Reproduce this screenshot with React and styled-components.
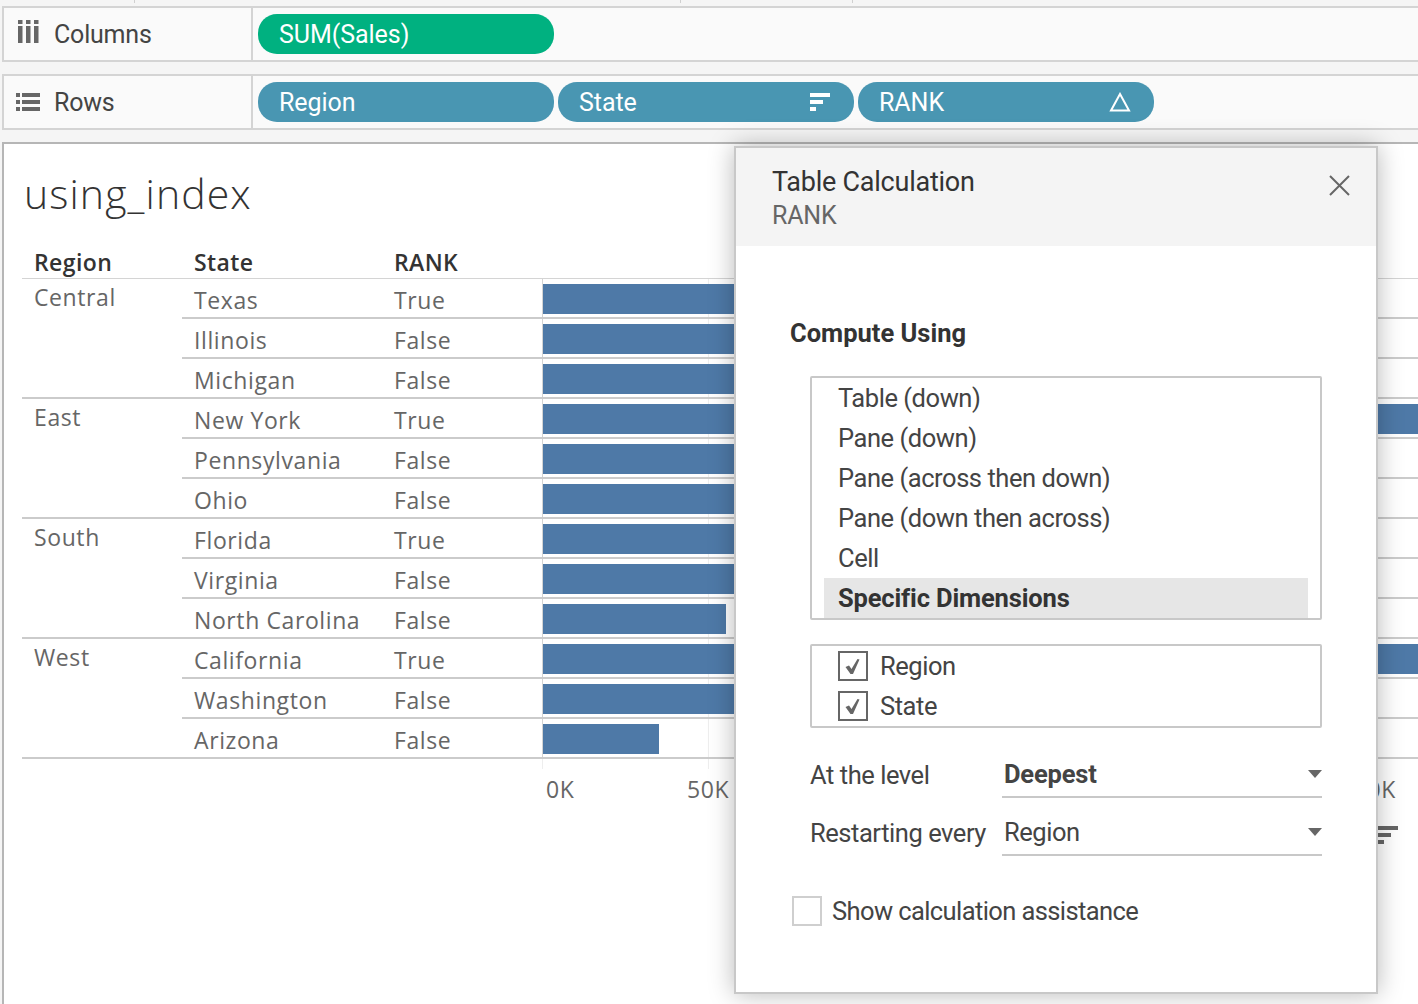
import React from 'react';
import styled, { createGlobalStyle } from 'styled-components';

const GlobalStyle = createGlobalStyle`
  html, body {
    margin: 0;
    padding: 0;
    background: #f5f5f5;
  }
  * {
    box-sizing: border-box;
  }
`;

const PX_PER_K = 3.3;

const regions = [
  { name: 'Central', rows: [['Texas', 'True', 170], ['Illinois', 'False', 80], ['Michigan', 'False', 76]] },
  { name: 'East', rows: [['New York', 'True', 310], ['Pennsylvania', 'False', 116], ['Ohio', 'False', 78]] },
  { name: 'South', rows: [['Florida', 'True', 89], ['Virginia', 'False', 71], ['North Carolina', 'False', 55.5]] },
  { name: 'West', rows: [['California', 'True', 457], ['Washington', 'False', 139], ['Arizona', 'False', 35]] },
];

const computeOptions = ['Table (down)', 'Pane (down)', 'Pane (across then down)', 'Pane (down then across)', 'Cell'];

const Page = styled.div`
  position: relative;
  width: 1418px;
  height: 1004px;
  overflow: hidden;
  display: flex;
  flex-direction: column;
  background: #f5f5f5;
  font-family: Roboto, "Liberation Sans", sans-serif;
  color: #333;
`;

const TopStrip = styled.div`
  height: 6px;
  display: flex;
  align-items: flex-start;
`;

const Tick = styled.span`
  width: 1px;
  height: 3px;
  background: #d0d0d0;
  margin-left: ${(p) => p.$gap}px;
`;

const Shelf = styled.div`
  height: 56px;
  margin: 0 0 12px 2px;
  display: flex;
  align-items: center;
  background: #fafafa;
  border: 2px solid #d4d4d4;
  border-right: none;
`;

const ShelfLabel = styled.div`
  width: 249px;
  height: 100%;
  padding-left: 12px;
  display: flex;
  align-items: center;
  gap: 14px;
  border-right: 2px solid #d4d4d4;
  font-size: 25px;
  letter-spacing: -0.2px;
  color: #444;
`;

const Pills = styled.div`
  display: flex;
  gap: 4px;
  padding-left: 5px;
`;

const Pill = styled.div`
  width: 296px;
  height: 40px;
  border-radius: 19px;
  padding: 0 23px 0 21px;
  display: flex;
  align-items: center;
  justify-content: space-between;
  background: ${(p) => (p.$measure ? '#00b180' : '#4996b2')};
  color: #fff;
  font-size: 25px;
  letter-spacing: -0.05px;
`;

const Viz = styled.div`
  flex: 1;
  margin-left: 2px;
  padding-left: 18px;
  background: #fff;
  border-top: 2px solid #b6b6b6;
  border-left: 2px solid #b6b6b6;
`;

const VizTitle = styled.div`
  height: 104px;
  padding: 24px 0 0 2px;
  font-family: "Open Sans", sans-serif;
  font-size: 41px;
  line-height: 50px;
  font-weight: 300;
  letter-spacing: 1.1px;
  color: #333;
`;

const Columns = styled.div`
  display: grid;
  grid-template-columns: 160px 200px 160px 1fr;
`;

const HeaderRow = styled(Columns)`
  height: 31px;
  border-bottom: 1px solid #d4d4d4;
`;

const HeaderCell = styled.div`
  padding-left: 12px;
  font-family: "Open Sans", sans-serif;
  font-size: 23px;
  line-height: 28px;
  font-weight: 600;
  letter-spacing: 0.4px;
  color: #333;
`;

const RegionGroup = styled.div`
  display: grid;
  grid-template-columns: 160px 1fr;
  border-bottom: 2px solid #cbcbcb;
`;

const RegionName = styled.div`
  padding: 2px 0 0 12px;
  font-family: "Open Sans", sans-serif;
  font-size: 23px;
  line-height: 32px;
  letter-spacing: 0.6px;
  color: #666;
`;

const DataRow = styled.div`
  display: grid;
  grid-template-columns: 200px 160px 1fr;
  height: ${(p) => (p.$last ? 38 : 40)}px;
  border-bottom: ${(p) => (p.$last ? 'none' : '2px solid #cbcbcb')};
`;

const DataCell = styled.div`
  padding: 5px 0 0 12px;
  font-family: "Open Sans", sans-serif;
  font-size: 23px;
  line-height: 32px;
  letter-spacing: 0.6px;
  color: #666;
`;

const Plot = styled.div`
  position: relative;
  padding-top: 5px;
  border-left: 1px solid #d4d4d4;
  &::before {
    content: '';
    position: absolute;
    left: 165px;
    top: 0;
    bottom: 0;
    width: 1px;
    background: #eee;
  }
`;

const Bar = styled.div`
  position: relative;
  height: 30px;
  background: #4e79a7;
`;

const AxisRow = styled.div`
  margin-left: 520px;
  height: 10px;
  border-left: 1px solid #eee;
  position: relative;
  &::before {
    content: '';
    position: absolute;
    left: 165px;
    top: 0;
    bottom: 0;
    width: 1px;
    background: #eee;
  }
`;

const AxisLabels = styled.div`
  position: relative;
  margin-left: 520px;
  height: 44px;
`;

const AxisLabel = styled.span`
  position: absolute;
  top: 4px;
  transform: ${(p) => (p.$first ? 'none' : 'translateX(-50%)')};
  font-family: "Open Sans", sans-serif;
  font-size: 23px;
  line-height: 32px;
  letter-spacing: 0.6px;
  color: #666;
`;

const SortRow = styled.div`
  display: flex;
  justify-content: flex-end;
  padding: 12px 19px 0 0;
`;

const Dialog = styled.div`
  position: absolute;
  left: 734px;
  top: 146px;
  width: 644px;
  height: 848px;
  background: #fff;
  border: 2px solid #c8c8c8;
  box-shadow: 0 0 24px rgba(0, 0, 0, 0.28);
  display: flex;
  flex-direction: column;
`;

const DialogHeader = styled.div`
  height: 98px;
  padding: 17px 25px 0 36px;
  display: flex;
  justify-content: space-between;
  align-items: flex-start;
  background: #f4f4f4;
`;

const DialogTitle = styled.div`
  font-size: 27px;
  line-height: 34px;
  letter-spacing: -0.25px;
  color: #333;
`;

const DialogSub = styled.div`
  font-size: 25px;
  line-height: 34px;
  letter-spacing: -0.2px;
  color: #666;
`;

const CloseButton = styled.button`
  margin-top: 8px;
  padding: 0;
  border: none;
  background: none;
  display: flex;
`;

const DialogBody = styled.div`
  flex: 1;
  padding: 70px 54px 0 54px;
  font-size: 25.5px;
  letter-spacing: -0.45px;
  color: #444;
`;

const SectionTitle = styled.div`
  font-size: 25.5px;
  line-height: 34px;
  font-weight: 700;
  letter-spacing: 0;
  color: #333;
  margin: 0 0 26px 0;
`;

const ListBox = styled.div`
  margin-left: 20px;
  padding: 0 12px;
  border: 2px solid #c8c8c8;
  border-radius: 2px;
  margin-bottom: ${(p) => p.$mb || 0}px;
`;

const ListItem = styled.div`
  height: 40px;
  padding-left: 14px;
  display: flex;
  align-items: center;
  background: ${(p) => (p.$selected ? '#e6e6e6' : 'transparent')};
  font-weight: ${(p) => (p.$selected ? 700 : 400)};
  letter-spacing: ${(p) => (p.$selected ? '-0.15px' : 'inherit')};
  color: ${(p) => (p.$selected ? '#333' : '#444')};
`;

const CheckRow = styled.div`
  height: 40px;
  padding-left: 14px;
  display: flex;
  align-items: center;
  gap: 12px;
`;

const CheckBox = styled.span`
  width: 30px;
  height: 30px;
  flex: none;
  display: flex;
  align-items: center;
  justify-content: center;
  border: 2px solid ${(p) => (p.$off ? '#cfcfcf' : '#666')};
`;

const FieldRow = styled.div`
  margin-left: 20px;
  height: 58px;
  display: grid;
  grid-template-columns: 192px 1fr;
  align-items: stretch;
`;

const FieldLabel = styled.div`
  padding-top: 13px;
  line-height: 34px;
`;

const Select = styled.div`
  display: flex;
  justify-content: space-between;
  align-items: flex-start;
  padding: 12px 0 0 2px;
  line-height: 34px;
  height: 53px;
  border-bottom: 2px solid #c8c8c8;
  font-weight: ${(p) => (p.$bold ? 700 : 400)};
  letter-spacing: ${(p) => (p.$bold ? '-0.2px' : 'inherit')};
`;

const Caret = styled.span`
  margin-top: 13px;
  width: 0;
  height: 0;
  border-left: 7px solid transparent;
  border-right: 7px solid transparent;
  border-top: 8px solid #666;
`;

const AssistRow = styled.div`
  margin: 35px 0 0 2px;
  height: 30px;
  display: flex;
  align-items: center;
  gap: 10px;
  letter-spacing: -0.6px;
`;

const ColumnsIcon = () => (
  <svg width="24" height="28" viewBox="0 0 24 28" fill="#666">
    <rect x="2" y="0" width="4.5" height="4" />
    <rect x="2" y="6" width="4.5" height="17" />
    <rect x="10" y="0" width="4.5" height="4" />
    <rect x="10" y="6" width="4.5" height="17" />
    <rect x="18" y="0" width="4.5" height="4" />
    <rect x="18" y="6" width="4.5" height="17" />
  </svg>
);

const RowsIcon = () => (
  <svg width="24" height="20" viewBox="0 0 24 20" fill="#666">
    <rect x="0" y="1" width="4" height="4" />
    <rect x="6" y="1" width="18" height="4" />
    <rect x="0" y="8" width="4" height="4" />
    <rect x="6" y="8" width="18" height="4" />
    <rect x="0" y="15" width="4" height="4" />
    <rect x="6" y="15" width="18" height="4" />
  </svg>
);

const SortIcon = ({ color }) => (
  <svg width="21" height="20" viewBox="0 0 21 20" fill={color}>
    <rect x="0" y="1" width="20" height="4" />
    <rect x="0" y="8" width="13" height="4" />
    <rect x="0" y="15" width="6" height="4" />
  </svg>
);

const DeltaIcon = () => (
  <svg width="22" height="20" viewBox="0 0 22 20" fill="none" stroke="#fff" strokeWidth="2">
    <path d="M11 2 L20 18.5 L2 18.5 Z" />
  </svg>
);

const CloseIcon = () => (
  <svg width="24" height="24" viewBox="0 0 24 24" fill="none" stroke="#666" strokeWidth="2">
    <path d="M3 3 L22 22 M22 3 L3 22" />
  </svg>
);

const CheckIcon = () => (
  <svg width="20" height="20" viewBox="0 0 20 20" fill="#666">
    <path d="M2.5 11 L6 9.5 L8.5 13 L14.5 3 L16.5 3.5 L10 18 L7.5 18 Z" />
  </svg>
);

const App = () => {
  return (
    <Page>
      <GlobalStyle />
      <TopStrip>
        <Tick $gap={134} />
        <Tick $gap={545} />
        <Tick $gap={171} />
      </TopStrip>

      <Shelf>
        <ShelfLabel>
          <ColumnsIcon />
          Columns
        </ShelfLabel>
        <Pills>
          <Pill $measure>SUM(Sales)</Pill>
        </Pills>
      </Shelf>
      <Shelf>
        <ShelfLabel>
          <RowsIcon />
          Rows
        </ShelfLabel>
        <Pills>
          <Pill>Region</Pill>
          <Pill>
            State
            <SortIcon color="#fff" />
          </Pill>
          <Pill>
            RANK
            <DeltaIcon />
          </Pill>
        </Pills>
      </Shelf>

      <Viz>
        <VizTitle>using_index</VizTitle>
        <HeaderRow>
          <HeaderCell>Region</HeaderCell>
          <HeaderCell>State</HeaderCell>
          <HeaderCell>RANK</HeaderCell>
        </HeaderRow>
        {regions.map((region) => (
          <RegionGroup key={region.name}>
            <RegionName>{region.name}</RegionName>
            <div>
              {region.rows.map(([state, rank, sales], i) => (
                <DataRow key={state} $last={i === region.rows.length - 1}>
                  <DataCell>{state}</DataCell>
                  <DataCell>{rank}</DataCell>
                  <Plot>
                    <Bar style={{ width: sales * PX_PER_K }} />
                  </Plot>
                </DataRow>
              ))}
            </div>
          </RegionGroup>
        ))}
        <AxisRow />
        <AxisLabels>
          <AxisLabel $first style={{ left: 4 }}>0K</AxisLabel>
          <AxisLabel style={{ left: 166 }}>50K</AxisLabel>
          <AxisLabel style={{ left: 826 }}>250K</AxisLabel>
        </AxisLabels>
        <SortRow>
          <SortIcon color="#666" />
        </SortRow>
      </Viz>

      <Dialog>
        <DialogHeader>
          <div>
            <DialogTitle>Table Calculation</DialogTitle>
            <DialogSub>RANK</DialogSub>
          </div>
          <CloseButton>
            <CloseIcon />
          </CloseButton>
        </DialogHeader>
        <DialogBody>
          <SectionTitle>Compute Using</SectionTitle>
          <ListBox $mb={24}>
            {computeOptions.map((opt) => (
              <ListItem key={opt}>{opt}</ListItem>
            ))}
            <ListItem $selected>Specific Dimensions</ListItem>
          </ListBox>
          <ListBox $mb={17}>
            <CheckRow>
              <CheckBox><CheckIcon /></CheckBox>
              Region
            </CheckRow>
            <CheckRow>
              <CheckBox><CheckIcon /></CheckBox>
              State
            </CheckRow>
          </ListBox>
          <FieldRow>
            <FieldLabel>At the level</FieldLabel>
            <Select $bold>
              Deepest
              <Caret />
            </Select>
          </FieldRow>
          <FieldRow>
            <FieldLabel>Restarting every</FieldLabel>
            <Select>
              Region
              <Caret />
            </Select>
          </FieldRow>
          <AssistRow>
            <CheckBox $off />
            Show calculation assistance
          </AssistRow>
        </DialogBody>
      </Dialog>
    </Page>
  );
};

export default App;
